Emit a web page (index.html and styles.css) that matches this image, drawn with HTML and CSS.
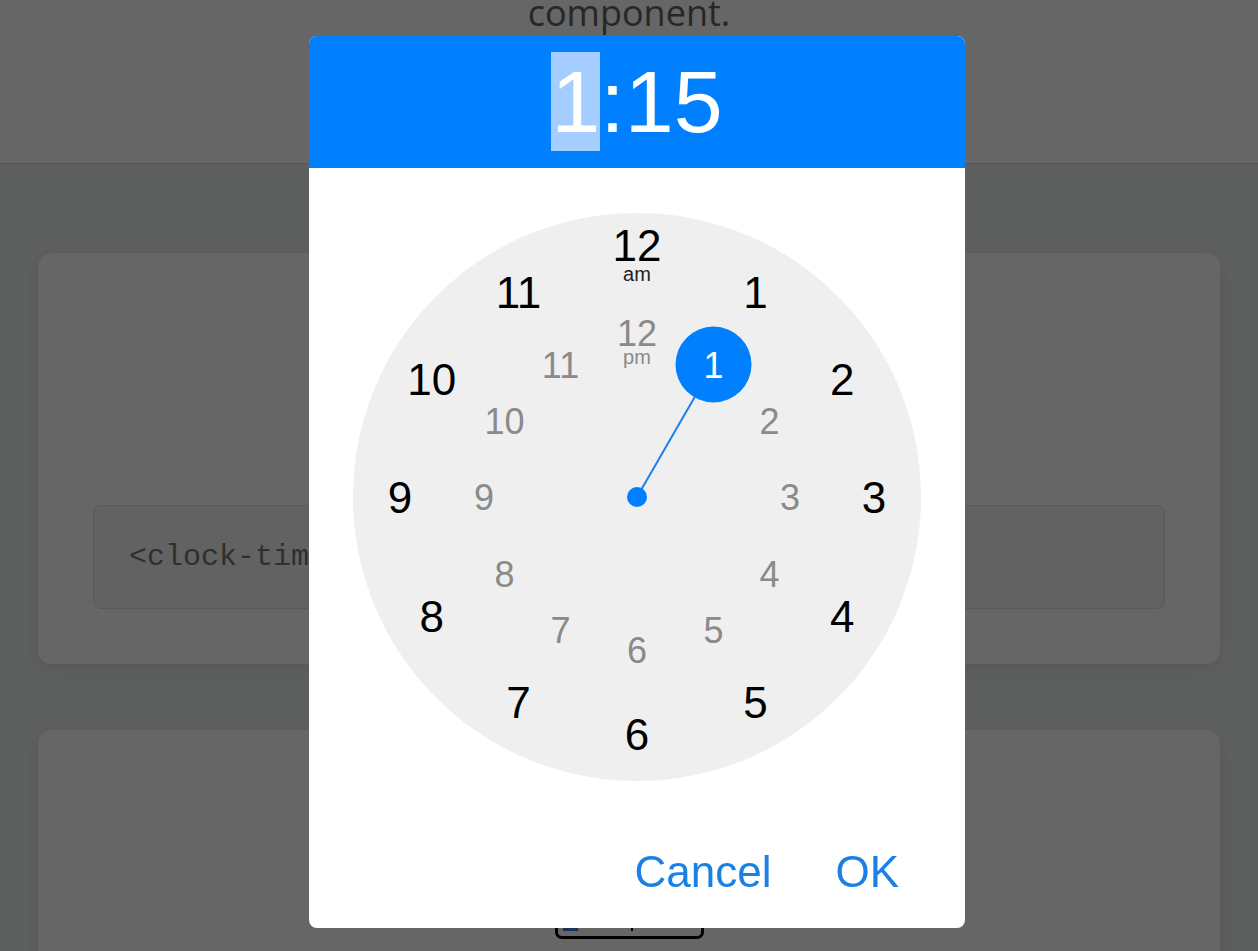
FILE: index.html
```html
<!DOCTYPE html>
<html lang="en">
<head>
    <meta charset="UTF-8">
    <meta name="viewport" content="width=device-width, initial-scale=1.0">
    <title>clock-time-picker</title>
    <link rel="stylesheet" href="styles.css">
</head>
<body class="modal-open">
    <header class="page-header">
        <p class="lead">component.</p>
    </header>

    <main class="page-main">
        <section class="card">
            <div class="demo">
                <div class="time-input"><span class="hl"></span><span class="caret"></span></div>
            </div>
            <pre class="code">&lt;clock-time-picker&gt;&lt;/clock-time-picker&gt;</pre>
        </section>

        <section class="card">
            <div class="demo">
                <div class="time-input"><span class="hl"></span><span class="caret"></span></div>
            </div>
        </section>
    </main>

    <!-- picker dialog -->
    <div class="overlay">
        <div class="dialog">
            <div class="dialog-head"><span class="sel">1</span>:15</div>

            <div class="dialog-body">
                <svg class="dial" width="568" height="568" viewBox="0 0 568 568">
                    <circle cx="284" cy="284" r="284" class="face"/>

                    <!-- outer ring: am hours -->
                    <text class="outer" x="284" y="48">12</text>
                    <text class="label" x="284" y="68">am</text>
                    <text class="outer" x="402.5" y="95">1</text>
                    <text class="outer" x="489.3" y="181.5">2</text>
                    <text class="outer" x="521" y="300">3</text>
                    <text class="outer" x="489.3" y="418.5">4</text>
                    <text class="outer" x="402.5" y="505">5</text>
                    <text class="outer" x="284" y="537">6</text>
                    <text class="outer" x="165.5" y="505">7</text>
                    <text class="outer" x="78.8" y="418.5">8</text>
                    <text class="outer" x="47" y="300">9</text>
                    <text class="outer" x="78.8" y="181.5">10</text>
                    <text class="outer" x="165.5" y="95">11</text>

                    <!-- inner ring: pm hours -->
                    <text class="inner" x="284" y="133">12</text>
                    <text class="label pm" x="284" y="151">pm</text>
                    <text class="inner" x="416.5" y="220.5">2</text>
                    <text class="inner" x="437" y="297">3</text>
                    <text class="inner" x="416.5" y="373.5">4</text>
                    <text class="inner" x="360.5" y="429.5">5</text>
                    <text class="inner" x="284" y="450">6</text>
                    <text class="inner" x="207.5" y="429.5">7</text>
                    <text class="inner" x="151.5" y="373.5">8</text>
                    <text class="inner" x="131" y="297">9</text>
                    <text class="inner" x="151.5" y="220.5">10</text>
                    <text class="inner" x="207.5" y="164.5">11</text>

                    <!-- hand -->
                    <line class="hand" x1="284" y1="284" x2="360.5" y2="151.5"/>
                    <circle class="pin" cx="284" cy="284" r="10"/>
                    <circle class="knob" cx="360.5" cy="151.5" r="38"/>
                    <text class="picked" x="360.5" y="164.5">1</text>
                </svg>
            </div>

            <div class="dialog-foot">
                <button class="text-btn">Cancel</button>
                <button class="text-btn">OK</button>
            </div>
        </div>
    </div>
</body>
</html>
```

FILE: styles.css
```css
* {
    margin: 0;
    padding: 0;
    box-sizing: border-box;
}

body {
    font-family: 'Open Sans', 'Liberation Sans', sans-serif;
    background: #eceff1;
    color: #333;
}

body.modal-open {
    overflow: hidden;
    height: 100vh;
}

/* page behind the dialog */
.page-header {
    display: flow-root;
    height: 164px;
    background: #fff;
    border-bottom: 1px solid #d6d6d6;
    text-align: center;
}

.lead {
    font-size: 36px;
    line-height: 1.5;
    color: #636363;
    margin-top: -14px;
}

.page-main {
    padding: 89px 38px 0;
    display: flex;
    flex-direction: column;
    gap: 66px;
}

.card {
    background: #fff;
    border-radius: 14px;
    box-shadow: 0 4px 20px rgba(0, 0, 0, 0.1);
    padding: 55px;
}

.demo {
    height: 172px;
    padding-top: 112px;
    margin-bottom: 25px;
    display: flex;
    justify-content: center;
}

.time-input {
    width: 149px;
    height: 42px;
    border: 3px solid #000;
    border-radius: 7px;
    display: flex;
    align-items: flex-end;
    padding: 0 0 5px 5px;
}

.time-input .hl {
    width: 15px;
    height: 28px;
    background: #4a80e0;
}

.time-input .caret {
    width: 2px;
    height: 6px;
    background: #000;
    margin-left: 53px;
}

.code {
    background: #f5f5f5;
    border: 1px solid #dedede;
    border-radius: 8px;
    padding: 30px 35px;
    font-family: 'Liberation Mono', monospace;
    font-size: 30px;
    line-height: 42px;
    color: #777;
    white-space: pre;
    overflow: hidden;
}

/* dialog */
.overlay {
    position: fixed;
    inset: 0;
    background: rgba(0, 0, 0, 0.6);
    display: flex;
    justify-content: center;
    align-items: flex-start;
    padding: 36px 0 0 16px;
}

.dialog {
    width: 656px;
    height: 892px;
    background: #fff;
    border-radius: 8px;
    overflow: hidden;
    display: flex;
    flex-direction: column;
    font-family: 'Liberation Sans', Arial, sans-serif;
}

.dialog-head {
    background: #0080ff;
    color: #fff;
    font-size: 88px;
    line-height: normal;
    padding: 15px 0;
    text-align: center;
}

.dialog-head .sel {
    background: #a6cdff;
}

.dialog-body {
    padding-top: 45px;
    display: flex;
    justify-content: center;
}

.dial text {
    text-anchor: middle;
    font-family: 'Liberation Sans', Arial, sans-serif;
}

.face {
    fill: #efefef;
}

.outer {
    font-size: 44px;
    fill: #000;
}

.inner {
    font-size: 36px;
    fill: #8a8a8a;
}

.label {
    font-size: 20px;
    fill: #222;
}

.label.pm {
    fill: #8a8a8a;
}

.hand {
    stroke: #1a80f0;
    stroke-width: 2;
}

.pin,
.knob {
    fill: #0080ff;
}

.picked {
    font-size: 36px;
    fill: #fff;
}

.dialog-foot {
    margin-top: auto;
    display: flex;
    justify-content: flex-end;
    padding: 0 34px 31px 0;
}

.text-btn {
    background: none;
    border: none;
    font-family: 'Liberation Sans', Arial, sans-serif;
    font-size: 44px;
    line-height: normal;
    color: #1a80e6;
    padding: 0 32px;
    cursor: pointer;
}
```
